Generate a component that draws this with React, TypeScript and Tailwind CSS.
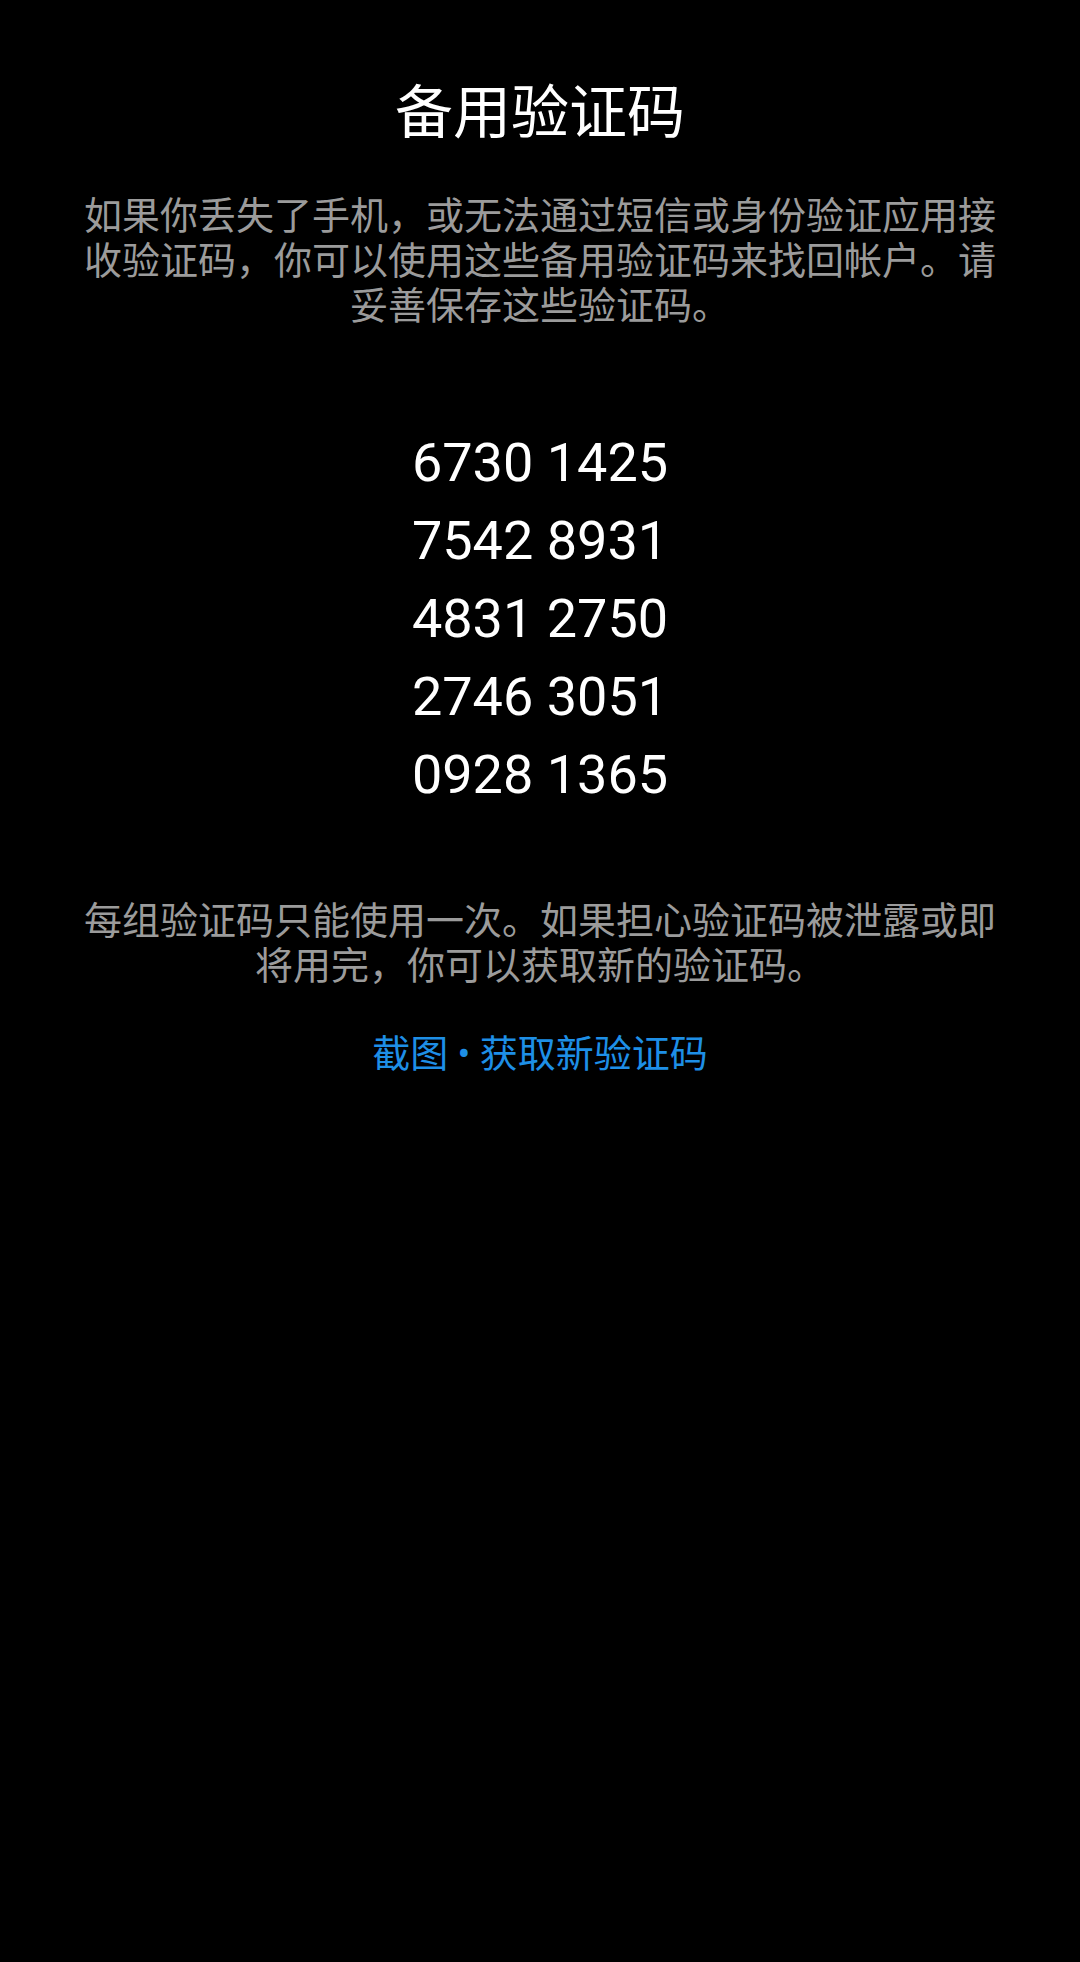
import React from "react";

const codes = ["6730 1425", "7542 8931", "4831 2750", "2746 3051", "0928 1365"];

export default function App() {
  return (
    <div
      className="w-[1080px] min-h-[1962px] bg-black flex flex-col items-center pt-[77px]"
      style={{ fontFamily: "Roboto, 'Noto Sans CJK SC', sans-serif" }}
    >
      <h1 className="text-white text-[58px] leading-[72px] font-normal">备用验证码</h1>
      <p className="mt-[45px] w-[920px] text-center text-[38px] leading-[45px] text-[#9b9b9b]">
        如果你丢失了手机，或无法通过短信或身份验证应用接收验证码，你可以使用这些备用验证码来找回帐户。请妥善保存这些验证码。
      </p>
      <div className="mt-[95px] flex flex-col items-center">
        {codes.map((c) => (
          <div key={c} className="text-white text-[54px] leading-[78px]">
            {c}
          </div>
        ))}
      </div>
      <p className="mt-[85px] w-[920px] text-center text-[38px] leading-[45px] text-[#9b9b9b]">
        每组验证码只能使用一次。如果担心验证码被泄露或即将用完，你可以获取新的验证码。
      </p>
      <div className="mt-[43px] text-[38px] leading-[45px] text-[#1e8fe6]">
        截图 • 获取新验证码
      </div>
    </div>
  );
}
